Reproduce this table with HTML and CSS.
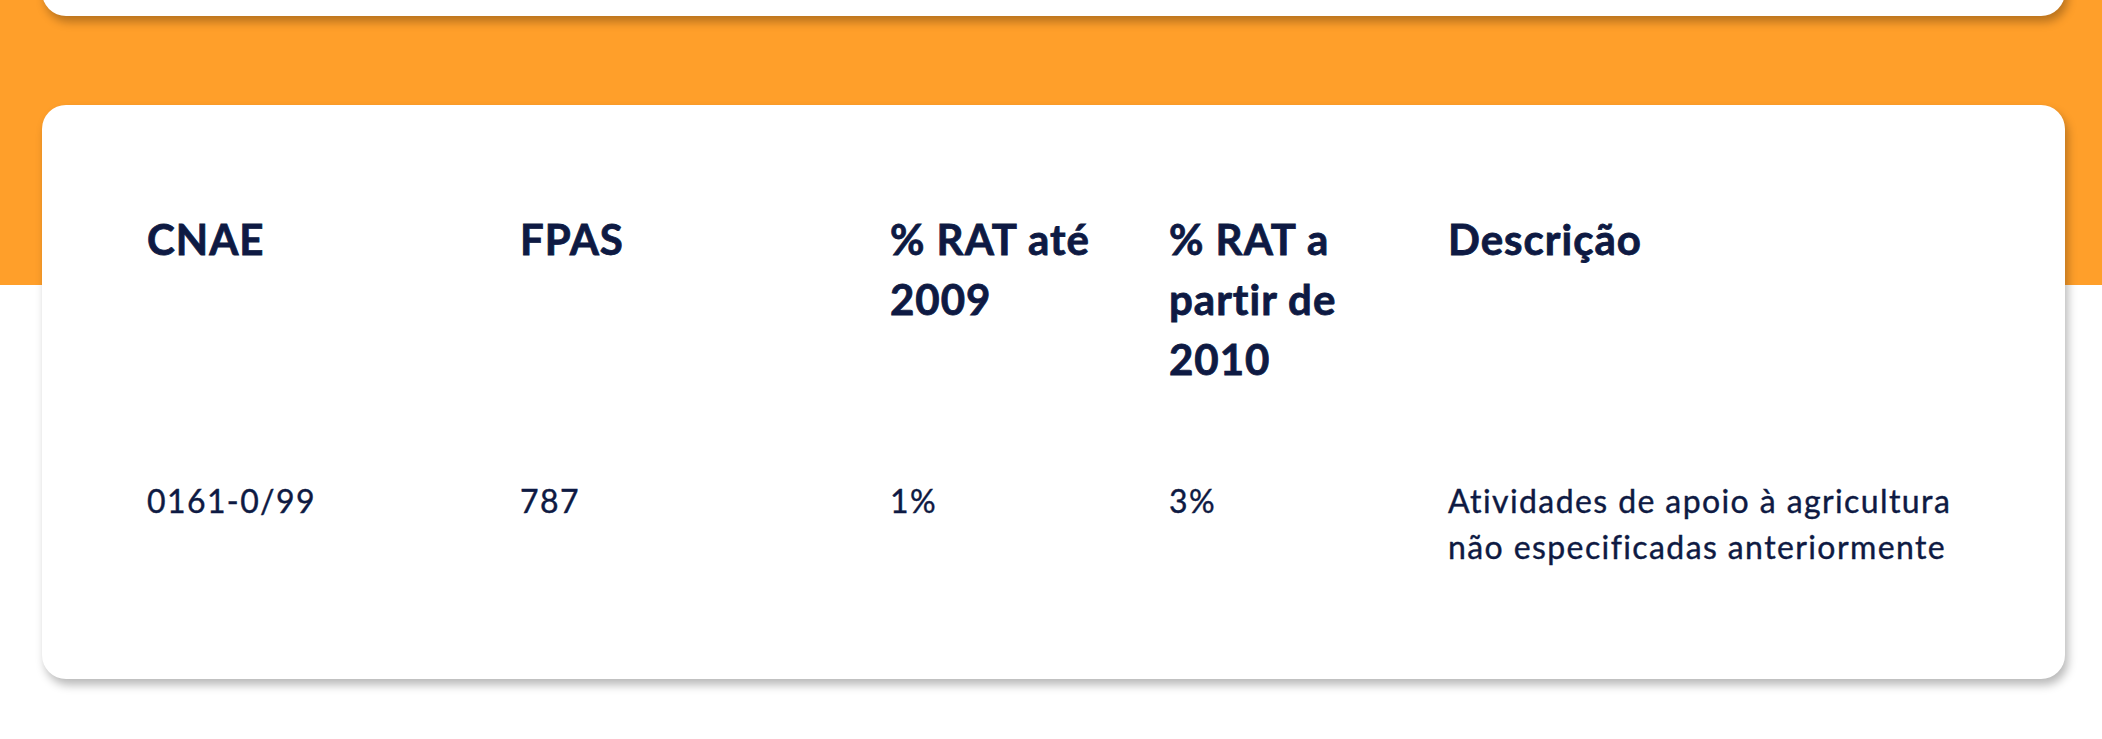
FILE: index.html
```html
<!DOCTYPE html>
<html lang="pt-BR">
<head>
<meta charset="utf-8">
<title>CNAE</title>
<link rel="stylesheet" href="styles.css">
</head>
<body>
<div class="page">
  <div class="card card-top"></div>
  <div class="card card-table">
    <div class="grid">
      <div class="th">CNAE</div>
      <div class="th">FPAS</div>
      <div class="th">% RAT até 2009</div>
      <div class="th">% RAT a partir de 2010</div>
      <div class="th">Descrição</div>
      <div class="td">0161-0/99</div>
      <div class="td">787</div>
      <div class="td">1%</div>
      <div class="td">3%</div>
      <div class="td desc">Atividades de apoio à agricultura não especificadas anteriormente</div>
    </div>
  </div>
</div>
</body>
</html>
```
FILE: styles.css
```css
html, body {
  margin: 0;
  padding: 0;
  background: #ffffff;
}
body {
  font-family: Lato, "Liberation Sans", sans-serif;
  color: #0e1a43;
  overflow: hidden;
}
.page {
  display: flow-root;
  background: linear-gradient(to bottom, #ff9f2a 0, #ff9f2a 285px, #ffffff 285px);
  padding: 0 37px 80px 42px;
}
.card {
  background: #ffffff;
  border-radius: 24px;
  box-shadow: 3px 6px 10px rgba(0, 0, 0, 0.28);
}
.card-top {
  margin-top: -40px;
  height: 56px;
}
.card-table {
  margin-top: 89px;
  padding: 104px 105px 109px 105px;
}
.grid {
  display: grid;
  grid-template-columns: 373px 370px 279px 279px 1fr;
  row-gap: 89px;
}
.th {
  font-weight: 700;
  font-size: 42px;
  line-height: 60px;
  letter-spacing: 1px;
  -webkit-text-stroke: 0.8px #0e1a43;
  padding-right: 40px;
}
.td {
  font-weight: 400;
  font-size: 32px;
  line-height: 46px;
  letter-spacing: 1.4px;
  -webkit-text-stroke: 0.4px #0e1a43;
  padding-right: 20px;
}
.desc {
  padding-right: 0;
}
```
